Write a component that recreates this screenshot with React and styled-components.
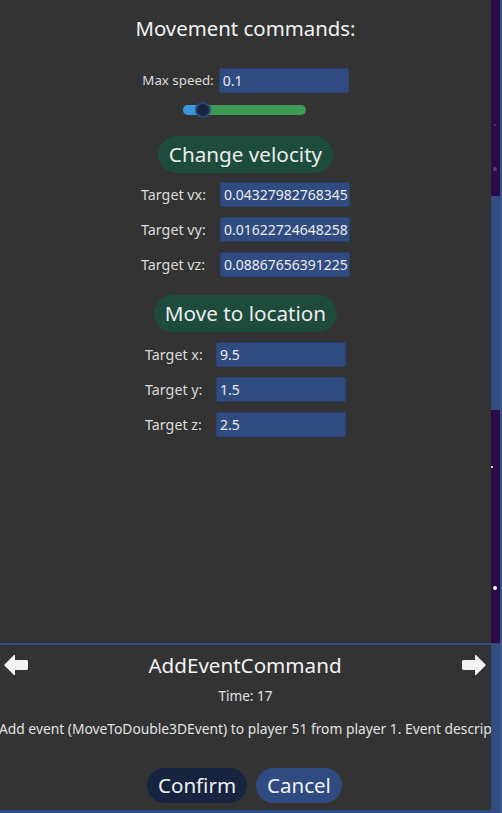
import React from 'react';
import styled, { createGlobalStyle } from 'styled-components';

const GlobalStyle = createGlobalStyle`
    html, body {
        margin: 0;
        padding: 0;
        background: #333333;
    }
    body {
        font-family: "Noto Sans", "DejaVu Sans", sans-serif;
        color: #e6e6e6;
    }
`;

const velocity = [
    { label: 'Target vx:', value: '0.04327982768345' },
    { label: 'Target vy:', value: '0.01622724648258' },
    { label: 'Target vz:', value: '0.08867656391225' },
];

const location = [
    { label: 'Target x:', value: '9.5' },
    { label: 'Target y:', value: '1.5' },
    { label: 'Target z:', value: '2.5' },
];

const Arrow = ({ flip }) => (
    <svg width="24" height="22" viewBox="0 0 24 22" style={flip ? { transform: 'scaleX(-1)' } : undefined}>
        <polygon points="0,11 10,1 11,1 11,6 23,6 24,7 24,15 23,16 11,16 11,21 10,21" fill="#f4f4f4" />
    </svg>
);

const App = () => {
    return (
        <Screen>
            <GlobalStyle />
            <MainColumn>
                <TopPanel>
                    <Title>Movement commands:</Title>
                    <SpeedRow>
                        <Label $size={13.3}>Max speed:</Label>
                        <Field>0.1</Field>
                    </SpeedRow>
                    <Slider>
                        <Track>
                            <Filled style={{ width: '16%' }} />
                        </Track>
                        <Knob style={{ left: 'calc(16% - 8px)' }} />
                    </Slider>
                    <Pill>Change velocity</Pill>
                    <FieldGrid $top={9} $labelWidth={67}>
                        {velocity.map((row) => (
                            <React.Fragment key={row.label}>
                                <Label>{row.label}</Label>
                                <Field>{row.value}</Field>
                            </React.Fragment>
                        ))}
                    </FieldGrid>
                    <Pill>Move to location</Pill>
                    <FieldGrid $top={10} $labelWidth={59}>
                        {location.map((row) => (
                            <React.Fragment key={row.label}>
                                <Label>{row.label}</Label>
                                <Field>{row.value}</Field>
                            </React.Fragment>
                        ))}
                    </FieldGrid>
                </TopPanel>
                <BottomPanel>
                    <HeaderRow>
                        <Arrow />
                        <CommandName>AddEventCommand</CommandName>
                        <Arrow flip />
                    </HeaderRow>
                    <TimeText>Time: 17</TimeText>
                    <Description>
                        Add event (MoveToDouble3DEvent) to player 51 from player 1. Event description: move to location
                    </Description>
                    <ButtonRow>
                        <ActionButton $variant="confirm">Confirm</ActionButton>
                        <ActionButton>Cancel</ActionButton>
                    </ButtonRow>
                </BottomPanel>
            </MainColumn>
            <SideStrip>
                <StripSegment $h={196} $purple>
                    <Dot style={{ top: 124, width: 2, height: 2 }} />
                    <Dot style={{ top: 167, width: 4, height: 4, left: 2 }} />
                </StripSegment>
                <StripSegment $h={214} />
                <StripSegment $h={233} $purple>
                    <Dot style={{ top: 56, width: 2, height: 2, left: 0, background: '#ffffff' }} />
                    <Dot style={{ top: 176, width: 4, height: 4, left: 2, background: '#ffffff' }} />
                </StripSegment>
                <StripSegment $h={170} />
            </SideStrip>
        </Screen>
    );
};

export default App;

const Screen = styled.div`
    display: flex;
    width: 502px;
    height: 813px;
    overflow: hidden;
    background: #333333;
`;

const MainColumn = styled.div`
    width: 491px;
    display: flex;
    flex-direction: column;
`;

const TopPanel = styled.div`
    height: 645px;
    display: flex;
    flex-direction: column;
    align-items: center;
    border-bottom: 2px solid #2e4c86;
    box-sizing: border-box;
    padding-top: 13px;
`;

const Title = styled.div`
    font-size: 20.4px;
    line-height: 30px;
    color: #f2f2f2;
`;

const SpeedRow = styled.div`
    display: flex;
    align-items: center;
    gap: 5px;
    margin-top: 25px;
`;

const Label = styled.div`
    font-size: ${(p) => p.$size || 14.3}px;
    line-height: 25px;
    color: #dcdcdc;
    white-space: nowrap;
`;

const Field = styled.div`
    width: 130px;
    height: 25px;
    box-sizing: border-box;
    padding: 0 3px;
    background: #304b80;
    border: 1px solid #2a4272;
    border-radius: 2px;
    font-size: 14px;
    line-height: 23px;
    color: #ececec;
    white-space: nowrap;
    overflow: hidden;
`;

const Slider = styled.div`
    position: relative;
    width: 123px;
    height: 16px;
    margin-top: 9px;
    margin-left: -2px;
    display: flex;
    align-items: center;
`;

const Track = styled.div`
    width: 100%;
    height: 10px;
    border-radius: 5px;
    background: #3c9a55;
    overflow: hidden;
`;

const Filled = styled.div`
    height: 100%;
    background: #3a95dc;
`;

const Knob = styled.div`
    position: absolute;
    top: 0;
    width: 16px;
    height: 16px;
    box-sizing: border-box;
    border-radius: 50%;
    background: #172540;
    border: 2px solid #2d4977;
`;

const Pill = styled.div`
    margin-top: 18px;
    height: 37px;
    padding: 0 11px;
    border-radius: 19px;
    background: #1d4b3c;
    font-size: 20.7px;
    line-height: 37px;
    color: #ececec;
`;

const FieldGrid = styled.div`
    display: grid;
    grid-template-columns: ${(p) => p.$labelWidth}px 130px;
    column-gap: 12px;
    row-gap: 10px;
    margin-top: ${(p) => p.$top}px;
`;

const BottomPanel = styled.div`
    flex: 1;
    display: flex;
    flex-direction: column;
    align-items: center;
    border-bottom: 3px solid #2e4c86;
    overflow: hidden;
`;

const HeaderRow = styled.div`
    align-self: stretch;
    display: flex;
    align-items: center;
    justify-content: space-between;
    padding: 5px 5px 0 4px;
    height: 30px;
`;

const CommandName = styled.div`
    font-size: 20.6px;
    line-height: 30px;
    color: #f2f2f2;
`;

const TimeText = styled.div`
    margin-top: 6px;
    font-size: 13.6px;
    line-height: 20px;
    color: #e2e2e2;
`;

const Description = styled.div`
    align-self: stretch;
    margin-top: 13px;
    margin-left: -1px;
    font-size: 13.8px;
    line-height: 20px;
    color: #e2e2e2;
    white-space: nowrap;
    overflow: hidden;
`;

const ButtonRow = styled.div`
    display: flex;
    gap: 9px;
    margin-top: 29px;
    margin-left: -2px;
`;

const ActionButton = styled.div`
    height: 35px;
    padding: 0 11px;
    border-radius: 18px;
    background: ${(p) => (p.$variant === 'confirm' ? '#172440' : '#304b80')};
    font-size: 20.5px;
    line-height: 35px;
    color: #f0f0f0;
`;

const SideStrip = styled.div`
    width: 11px;
    display: flex;
    flex-direction: column;
`;

const StripSegment = styled.div`
    position: relative;
    height: ${(p) => p.$h}px;
    flex-shrink: 0;
    box-sizing: border-box;
    background: ${(p) => (p.$purple ? '#2a0b45' : '#334d80')};
    border-right: 2px solid #37558c;
`;

const Dot = styled.span`
    position: absolute;
    left: 3px;
    border-radius: 50%;
    background: #5a3a7a;
`;
